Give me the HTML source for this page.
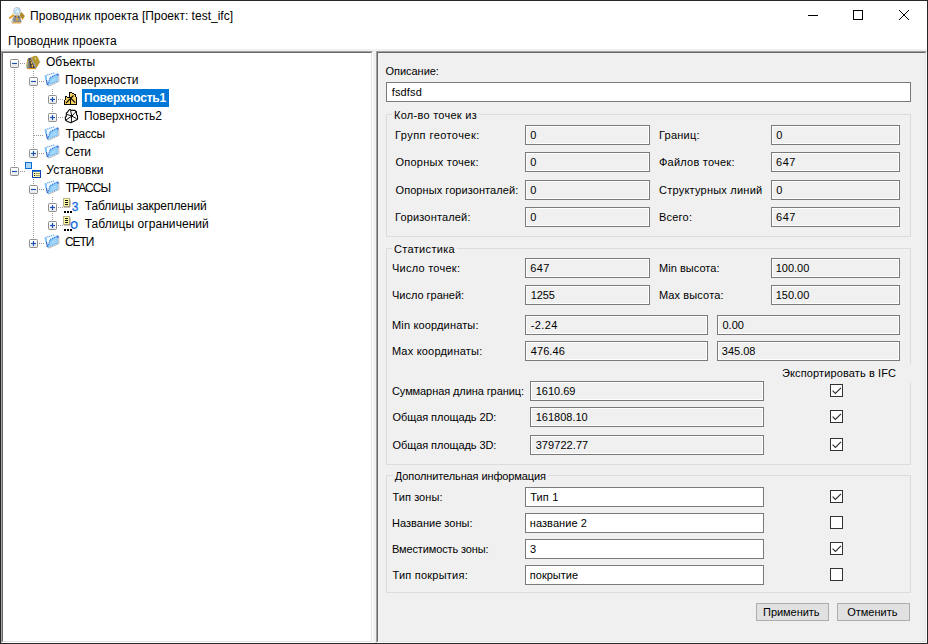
<!DOCTYPE html>
<html lang="ru"><head><meta charset="utf-8"><title>Проводник проекта</title>
<style>
html,body{margin:0;padding:0;background:#fff;}
body{width:928px;height:644px;overflow:hidden;position:relative;font-family:"Liberation Sans",sans-serif;color:#000;}
#win{position:absolute;left:0;top:0;width:926px;height:642px;border:1px solid #272727;background:#fff;}
.abs,span.t,span.s,span.sb,.ro,.ed,.cb,.grp,.btn{position:absolute;}
span.t{font-size:11px;line-height:13px;white-space:pre;}
span.s,span.sb{font-size:12px;line-height:15px;white-space:pre;}
span.sb{font-weight:bold;color:#fff;}
span.sk,span.sk2{position:absolute;font-size:12px;line-height:15px;color:#1b6fe0;}
span.sk{-webkit-text-stroke:0.3px #1b6fe0;}
span.sk2{font-weight:bold;font-size:10px;}
span.g{background:#f0f0f0;padding:0 2px;margin-left:-2px;}
span.g2{background:#f0f0f0;padding:3px 16px 3px 3px;margin:-3px 0 0 -3px;}
#strip{left:1px;top:49px;width:926px;height:594px;background:#f0f0f0;}
.panel{box-sizing:border-box;border-style:solid;border-width:1px;border-color:#a0a0a0 #fff #fff #a0a0a0;}
.panel>i{display:block;box-sizing:border-box;width:100%;height:100%;border-style:solid;border-width:1px;border-color:#696969 #e3e3e3 #e3e3e3 #696969;}
#tree{left:1px;top:51px;width:372px;height:592px;}
#tree>i{background:#fff;}
#right{left:376px;top:51px;width:551px;height:592px;}
#right>i{background:#f0f0f0;}
#selbg{left:82px;top:89px;width:87px;height:18px;background:#0078d7;}
.grp{box-sizing:border-box;border:1px solid #dcdcdc;left:386px;width:525px;}
.ro{height:16px;border:1px solid #7a7a7a;box-shadow:inset 0 0 0 1px #fff;background:#f0f0f0;padding:1px;}
.ed{height:18px;border:1px solid #7a7a7a;background:#fff;}
.cb{left:830px;width:11px;height:11px;border:1px solid #333;background:#fff;}
.cb svg{display:block;}
.btn{box-sizing:border-box;top:603px;width:73px;height:18px;border:1px solid #adadad;background:#e1e1e1;}
</style></head><body>
<div id="win"></div>
<div class="abs" id="strip"></div>
<div class="abs panel" id="tree"><i></i></div>
<div class="abs panel" id="right"><i></i></div>
<div class="abs" id="selbg"></div>

<svg class="abs" style="left:0;top:0" width="372" height="300" viewBox="0 0 372 300">
<defs><linearGradient id="bg" x1="0" y1="0" x2="0" y2="1"><stop offset="0" stop-color="#fff"/><stop offset=".55" stop-color="#fafafa"/><stop offset="1" stop-color="#e2e2e2"/></linearGradient></defs>
<rect x="10.5" y="59.5" width="8" height="8" rx="0.9" fill="url(#bg)" stroke="#8e8e8e"/><path d="M12 63.5H17" stroke="#1d4fb5" stroke-width="1.2"/>
<path d="M20 63.5H25" stroke="#9a9a9a" stroke-width="1" stroke-dasharray="1 1"/>
<rect x="29.5" y="77.5" width="8" height="8" rx="0.9" fill="url(#bg)" stroke="#8e8e8e"/><path d="M31 81.5H36" stroke="#1d4fb5" stroke-width="1.2"/>
<path d="M39 81.5H44" stroke="#9a9a9a" stroke-width="1" stroke-dasharray="1 1"/>
<rect x="48.5" y="95.5" width="8" height="8" rx="0.9" fill="url(#bg)" stroke="#8e8e8e"/><path d="M50 99.5H55" stroke="#1d4fb5" stroke-width="1.2"/><path d="M52.5 97V102" stroke="#1d4fb5" stroke-width="1.2"/>
<path d="M58 99.5H63" stroke="#9a9a9a" stroke-width="1" stroke-dasharray="1 1"/>
<rect x="48.5" y="113.5" width="8" height="8" rx="0.9" fill="url(#bg)" stroke="#8e8e8e"/><path d="M50 117.5H55" stroke="#1d4fb5" stroke-width="1.2"/><path d="M52.5 115V120" stroke="#1d4fb5" stroke-width="1.2"/>
<path d="M58 117.5H63" stroke="#9a9a9a" stroke-width="1" stroke-dasharray="1 1"/>
<path d="M34 135.5H44" stroke="#9a9a9a" stroke-width="1" stroke-dasharray="1 1"/>
<rect x="29.5" y="149.5" width="8" height="8" rx="0.9" fill="url(#bg)" stroke="#8e8e8e"/><path d="M31 153.5H36" stroke="#1d4fb5" stroke-width="1.2"/><path d="M33.5 151V156" stroke="#1d4fb5" stroke-width="1.2"/>
<path d="M39 153.5H44" stroke="#9a9a9a" stroke-width="1" stroke-dasharray="1 1"/>
<rect x="10.5" y="167.5" width="8" height="8" rx="0.9" fill="url(#bg)" stroke="#8e8e8e"/><path d="M12 171.5H17" stroke="#1d4fb5" stroke-width="1.2"/>
<path d="M20 171.5H25" stroke="#9a9a9a" stroke-width="1" stroke-dasharray="1 1"/>
<rect x="29.5" y="185.5" width="8" height="8" rx="0.9" fill="url(#bg)" stroke="#8e8e8e"/><path d="M31 189.5H36" stroke="#1d4fb5" stroke-width="1.2"/>
<path d="M39 189.5H44" stroke="#9a9a9a" stroke-width="1" stroke-dasharray="1 1"/>
<rect x="48.5" y="203.5" width="8" height="8" rx="0.9" fill="url(#bg)" stroke="#8e8e8e"/><path d="M50 207.5H55" stroke="#1d4fb5" stroke-width="1.2"/><path d="M52.5 205V210" stroke="#1d4fb5" stroke-width="1.2"/>
<path d="M58 207.5H63" stroke="#9a9a9a" stroke-width="1" stroke-dasharray="1 1"/>
<rect x="48.5" y="221.5" width="8" height="8" rx="0.9" fill="url(#bg)" stroke="#8e8e8e"/><path d="M50 225.5H55" stroke="#1d4fb5" stroke-width="1.2"/><path d="M52.5 223V228" stroke="#1d4fb5" stroke-width="1.2"/>
<path d="M58 225.5H63" stroke="#9a9a9a" stroke-width="1" stroke-dasharray="1 1"/>
<rect x="29.5" y="239.5" width="8" height="8" rx="0.9" fill="url(#bg)" stroke="#8e8e8e"/><path d="M31 243.5H36" stroke="#1d4fb5" stroke-width="1.2"/><path d="M33.5 241V246" stroke="#1d4fb5" stroke-width="1.2"/>
<path d="M39 243.5H44" stroke="#9a9a9a" stroke-width="1" stroke-dasharray="1 1"/>
<path d="M14.5 69V166" stroke="#9a9a9a" stroke-width="1" stroke-dasharray="1 1"/>
<path d="M33.5 71V76" stroke="#9a9a9a" stroke-width="1" stroke-dasharray="1 1"/>
<path d="M33.5 87V148" stroke="#9a9a9a" stroke-width="1" stroke-dasharray="1 1"/>
<path d="M52.5 89V94" stroke="#9a9a9a" stroke-width="1" stroke-dasharray="1 1"/>
<path d="M52.5 105V112" stroke="#9a9a9a" stroke-width="1" stroke-dasharray="1 1"/>
<path d="M33.5 179V184" stroke="#9a9a9a" stroke-width="1" stroke-dasharray="1 1"/>
<path d="M33.5 195V238" stroke="#9a9a9a" stroke-width="1" stroke-dasharray="1 1"/>
<path d="M52.5 197V202" stroke="#9a9a9a" stroke-width="1" stroke-dasharray="1 1"/>
<path d="M52.5 213V220" stroke="#9a9a9a" stroke-width="1" stroke-dasharray="1 1"/>
<g transform="translate(25 54)"><path d="M6 3.4L9.5 1.8L12 2L15.2 8L12.6 12L11.6 14Z" fill="#b8962f"/><path d="M3.2 4.2L6 3.4L11.8 14L1.4 14Z" fill="#8d9296"/><path d="M2.4 5L3.3 5L2 12.5L1 12.5Z" fill="#c9a432"/><path d="M4.6 4L6 3.4L11.8 14L9.6 14Z" fill="#9aa0a6"/><path d="M3.6 4.3L5.2 4L10 14L5 14Z" fill="#3a3638"/><path d="M3.3 4.3L4.2 4.6L5.4 14L3.8 14Z" fill="#6f7478"/><rect x="5" y="6" width="1.2" height="1.3" fill="#ef9a1a"/><rect x="5.9" y="7.7" width="1.4" height="2.1" fill="#f7c23a"/><rect x="6.6" y="10.6" width="1.5" height="2.7" fill="#f7b92e"/><path d="M9 4L11 3.8L11 6Z" fill="#c5dc92"/><circle cx="14.5" cy="8" r="0.8" fill="#9fb0b8"/><circle cx="12.6" cy="11.6" r="0.7" fill="#ef9a1a"/><circle cx="2" cy="11" r="0.7" fill="#a9d86a"/><path d="M2 14.6H11" stroke="#d98a12" stroke-width="1.1"/></g>
<g transform="translate(44 71.5)"><path d="M1.4 4L10.7 1.2L13.8 2.3L6.3 6L3.6 13.6Z" fill="#f4faff"/><path d="M14.7 3.4L15 9.9L5 14.5L4 14.1" fill="none" stroke="#9a9a9a" stroke-width="1" opacity=".7"/><path d="M6.3 6L13.9 2.2L14.2 9.6L3.7 13.8Z" fill="#8ccbf7"/><path d="M7.6 7.8L12.2 5.6L12.6 8.8L6.2 11.8Z" fill="#a4d8fb"/><path d="M1.4 4L10.8 1.2" stroke="#4a98ea" stroke-width="1.1" stroke-dasharray="1.1 0.9" fill="none"/><path d="M3.6 13.6L6.3 6L13.9 2.2" stroke="#2a78e0" stroke-width="1.15" stroke-dasharray="1.2 0.8" fill="none"/><path d="M3.7 13.8L14.2 9.6" stroke="#62aff2" stroke-width="0.9" stroke-dasharray="1.2 1" fill="none"/><path d="M1.6 4.6L3.4 13.4" stroke="#1f55c4" stroke-width="1.1" fill="none"/><path d="M13.9 2.2L14 4.2" stroke="#1f55c4" stroke-width="1.2"/><path d="M1.2 3.8L2.4 8.5" stroke="#86c9f7" stroke-width="1.8"/></g>
<g transform="translate(63 90)"><path d="M1.5 14.5L1.5 10L2.5 10L2.5 6.5L4 6.5L6.5 7.5L6.5 2.5L9 2.5L12.5 4.5L12.5 7L13.5 7L13.5 14.5Z" fill="#f9d265"/><g fill="#050505" shape-rendering="crispEdges"><rect x="1" y="14" width="13" height="1"/><rect x="1" y="10" width="1" height="4"/><rect x="2" y="6" width="1" height="4"/><rect x="2" y="6" width="2" height="1"/><rect x="4" y="7" width="2" height="1"/><rect x="6" y="2" width="1" height="6"/><rect x="6" y="2" width="3" height="1"/><rect x="9" y="3" width="2" height="1"/><rect x="11" y="4" width="2" height="1"/><rect x="12" y="4" width="1" height="3"/><rect x="13" y="7" width="1" height="8"/><rect x="7" y="7" width="1" height="7"/></g><path d="M3 13L10.5 5.5M8 8.5L12.2 12.7" stroke="#050505" stroke-width="1.1" fill="none"/></g>
<g transform="translate(63 108)"><path d="M7 1.4L8 2.4L12 2.4L13.3 3.8L13.6 7L14.5 7.4L14.5 11.3L12 12.7L10.3 13.5L7.8 14.7L4.4 13.5L2.5 12.1L2.3 9L3.3 8.5L3.3 5.2L4.7 4L5.5 2.4Z" fill="#fff" stroke="#050505" stroke-width="1.1" stroke-linejoin="round"/><path d="M8.9 8L7.5 2.6M8.9 8L12.3 4.4M8.9 8L13.5 10.6M8.6 8L8.3 14M8.9 8L3 12M8.9 8L3.6 6.4" stroke="#050505" stroke-width="0.95" fill="none"/><rect x="8.2" y="7.2" width="1.6" height="1.6" fill="#050505"/><rect x="12.2" y="3.2" width="1.6" height="1.6" fill="#050505"/></g>
<g transform="translate(44 125.5)"><path d="M1.4 4L10.7 1.2L13.8 2.3L6.3 6L3.6 13.6Z" fill="#f4faff"/><path d="M14.7 3.4L15 9.9L5 14.5L4 14.1" fill="none" stroke="#9a9a9a" stroke-width="1" opacity=".7"/><path d="M6.3 6L13.9 2.2L14.2 9.6L3.7 13.8Z" fill="#8ccbf7"/><path d="M7.6 7.8L12.2 5.6L12.6 8.8L6.2 11.8Z" fill="#a4d8fb"/><path d="M1.4 4L10.8 1.2" stroke="#4a98ea" stroke-width="1.1" stroke-dasharray="1.1 0.9" fill="none"/><path d="M3.6 13.6L6.3 6L13.9 2.2" stroke="#2a78e0" stroke-width="1.15" stroke-dasharray="1.2 0.8" fill="none"/><path d="M3.7 13.8L14.2 9.6" stroke="#62aff2" stroke-width="0.9" stroke-dasharray="1.2 1" fill="none"/><path d="M1.6 4.6L3.4 13.4" stroke="#1f55c4" stroke-width="1.1" fill="none"/><path d="M13.9 2.2L14 4.2" stroke="#1f55c4" stroke-width="1.2"/><path d="M1.2 3.8L2.4 8.5" stroke="#86c9f7" stroke-width="1.8"/></g>
<g transform="translate(44 143.5)"><path d="M1.4 4L10.7 1.2L13.8 2.3L6.3 6L3.6 13.6Z" fill="#f4faff"/><path d="M14.7 3.4L15 9.9L5 14.5L4 14.1" fill="none" stroke="#9a9a9a" stroke-width="1" opacity=".7"/><path d="M6.3 6L13.9 2.2L14.2 9.6L3.7 13.8Z" fill="#8ccbf7"/><path d="M7.6 7.8L12.2 5.6L12.6 8.8L6.2 11.8Z" fill="#a4d8fb"/><path d="M1.4 4L10.8 1.2" stroke="#4a98ea" stroke-width="1.1" stroke-dasharray="1.1 0.9" fill="none"/><path d="M3.6 13.6L6.3 6L13.9 2.2" stroke="#2a78e0" stroke-width="1.15" stroke-dasharray="1.2 0.8" fill="none"/><path d="M3.7 13.8L14.2 9.6" stroke="#62aff2" stroke-width="0.9" stroke-dasharray="1.2 1" fill="none"/><path d="M1.6 4.6L3.4 13.4" stroke="#1f55c4" stroke-width="1.1" fill="none"/><path d="M13.9 2.2L14 4.2" stroke="#1f55c4" stroke-width="1.2"/><path d="M1.2 3.8L2.4 8.5" stroke="#86c9f7" stroke-width="1.8"/></g>
<g transform="translate(25 161)"><rect x="0.5" y="1.5" width="6" height="6" fill="#a8d4f7" stroke="#0b6fd6"/><rect x="7.5" y="9.5" width="8" height="7" fill="#fdfbb5" stroke="#123fb0"/><path d="M7 10H16" stroke="#0b5bd0" stroke-width="1.6"/><path d="M9 12.5H10M9 14.5H10" stroke="#111" stroke-width="1"/><path d="M10.5 12.5H15M10.5 14.5H15" stroke="#8a8a6a" stroke-width="0.8"/></g>
<g transform="translate(44 179.5)"><path d="M1.4 4L10.7 1.2L13.8 2.3L6.3 6L3.6 13.6Z" fill="#f4faff"/><path d="M14.7 3.4L15 9.9L5 14.5L4 14.1" fill="none" stroke="#9a9a9a" stroke-width="1" opacity=".7"/><path d="M6.3 6L13.9 2.2L14.2 9.6L3.7 13.8Z" fill="#8ccbf7"/><path d="M7.6 7.8L12.2 5.6L12.6 8.8L6.2 11.8Z" fill="#a4d8fb"/><path d="M1.4 4L10.8 1.2" stroke="#4a98ea" stroke-width="1.1" stroke-dasharray="1.1 0.9" fill="none"/><path d="M3.6 13.6L6.3 6L13.9 2.2" stroke="#2a78e0" stroke-width="1.15" stroke-dasharray="1.2 0.8" fill="none"/><path d="M3.7 13.8L14.2 9.6" stroke="#62aff2" stroke-width="0.9" stroke-dasharray="1.2 1" fill="none"/><path d="M1.6 4.6L3.4 13.4" stroke="#1f55c4" stroke-width="1.1" fill="none"/><path d="M13.9 2.2L14 4.2" stroke="#1f55c4" stroke-width="1.2"/><path d="M1.2 3.8L2.4 8.5" stroke="#86c9f7" stroke-width="1.8"/></g>
<g transform="translate(63 197)"><rect x="0.5" y="1.5" width="6" height="8" fill="#fdfba0" stroke="#b9b394"/><path d="M7 2.5V10H1" stroke="#8c8877" stroke-width="1" fill="none"/><path d="M2 3.5H5M2 5.5H5M2 7.5H5" stroke="#111" stroke-width="1.2"/><path d="M1 15H3M4 15H6M7 15H9" stroke="#000" stroke-width="2"/></g>
<g transform="translate(63 215)"><rect x="0.5" y="1.5" width="6" height="8" fill="#fdfba0" stroke="#b9b394"/><path d="M7 2.5V10H1" stroke="#8c8877" stroke-width="1" fill="none"/><path d="M2 3.5H5M2 5.5H5M2 7.5H5" stroke="#111" stroke-width="1.2"/><path d="M1 15H3M4 15H6M7 15H9" stroke="#000" stroke-width="2"/></g>
<g transform="translate(44 233.5)"><path d="M1.4 4L10.7 1.2L13.8 2.3L6.3 6L3.6 13.6Z" fill="#f4faff"/><path d="M14.7 3.4L15 9.9L5 14.5L4 14.1" fill="none" stroke="#9a9a9a" stroke-width="1" opacity=".7"/><path d="M6.3 6L13.9 2.2L14.2 9.6L3.7 13.8Z" fill="#8ccbf7"/><path d="M7.6 7.8L12.2 5.6L12.6 8.8L6.2 11.8Z" fill="#a4d8fb"/><path d="M1.4 4L10.8 1.2" stroke="#4a98ea" stroke-width="1.1" stroke-dasharray="1.1 0.9" fill="none"/><path d="M3.6 13.6L6.3 6L13.9 2.2" stroke="#2a78e0" stroke-width="1.15" stroke-dasharray="1.2 0.8" fill="none"/><path d="M3.7 13.8L14.2 9.6" stroke="#62aff2" stroke-width="0.9" stroke-dasharray="1.2 1" fill="none"/><path d="M1.6 4.6L3.4 13.4" stroke="#1f55c4" stroke-width="1.1" fill="none"/><path d="M13.9 2.2L14 4.2" stroke="#1f55c4" stroke-width="1.2"/><path d="M1.2 3.8L2.4 8.5" stroke="#86c9f7" stroke-width="1.8"/></g>
</svg>

<!-- title icon + caption buttons -->
<svg class="abs" style="left:9px;top:7px" width="17" height="17" viewBox="0 0 17 17">
<path d="M10.7 7.2L12.5 5L15.9 9.1L13.8 12.5L11.6 10.7Z" fill="#b08a2a"/>
<path d="M5.2 8.3L10.6 8.3L12.8 15.3L2.3 15.3Z" fill="#8b8e8d"/>
<path d="M3.6 11L2.5 15L4.5 15Z" fill="#c3c8cc"/>
<path d="M4.2 8.4L0.8 11" stroke="#f0a030" stroke-width="2.2" stroke-linecap="round"/>
<circle cx="4.3" cy="7.3" r="0.8" fill="#a9d86a"/>
<rect x="6.3" y="9" width="1" height="1" fill="#4a2a2a"/><rect x="9.3" y="9.6" width="1" height="1.3" fill="#4a2a2a"/>
<rect x="7.1" y="8.8" width="1.3" height="1.3" fill="#f3b11f"/><rect x="7.5" y="11.2" width="1.5" height="2.4" fill="#f3b11f"/>
<circle cx="8" cy="3.9" r="3.4" fill="#b4defb" stroke="#b9c0c7" stroke-width="1"/>
<circle cx="8.7" cy="4.7" r="1.6" fill="#e3eef5"/>
<path d="M5.6 3.4A2.6 2.6 0 0 1 7.6 1.5" stroke="#fff" stroke-width="1" fill="none"/>
<path d="M3 15.9H12" stroke="#d98a12" stroke-width="1"/>
<circle cx="13.5" cy="12" r="0.7" fill="#ef9a1a"/>
</svg>
<svg class="abs" style="left:800px;top:5px" width="120" height="22" viewBox="0 0 120 22" shape-rendering="crispEdges">
<path d="M8 10.5H18" stroke="#000" stroke-width="1"/>
<rect x="53.5" y="5.5" width="9" height="9" fill="none" stroke="#000" stroke-width="1"/>
<path d="M99 5L109 15M109 5L99 15" stroke="#000" stroke-width="1" shape-rendering="geometricPrecision"/>
</svg>

<!-- group boxes -->
<div class="grp" style="top:114px;height:123px"></div>
<div class="grp" style="top:248px;height:217px"></div>
<div class="grp" style="top:475px;height:118px"></div>

<div class="ed" style="left:386px;top:82px;width:523px"></div>
<div class="ro" style="left:525px;top:125px;width:121px"></div>
<div class="ro" style="left:771px;top:125px;width:125px"></div>
<div class="ro" style="left:525px;top:152px;width:121px"></div>
<div class="ro" style="left:771px;top:152px;width:125px"></div>
<div class="ro" style="left:525px;top:180px;width:121px"></div>
<div class="ro" style="left:771px;top:180px;width:125px"></div>
<div class="ro" style="left:525px;top:207px;width:121px"></div>
<div class="ro" style="left:771px;top:207px;width:125px"></div>
<div class="ro" style="left:525px;top:258px;width:121px"></div>
<div class="ro" style="left:771px;top:258px;width:125px"></div>
<div class="ro" style="left:525px;top:285px;width:121px"></div>
<div class="ro" style="left:771px;top:285px;width:125px"></div>
<div class="ro" style="left:525px;top:315px;width:179px"></div>
<div class="ro" style="left:717px;top:315px;width:179px"></div>
<div class="ro" style="left:525px;top:341px;width:179px"></div>
<div class="ro" style="left:717px;top:341px;width:179px"></div>
<div class="ro" style="left:530px;top:381px;width:230px"></div>
<div class="ro" style="left:530px;top:407px;width:230px"></div>
<div class="ro" style="left:530px;top:435px;width:230px"></div>
<div class="ed" style="left:525px;top:487px;width:237px"></div>
<div class="ed" style="left:525px;top:513px;width:237px"></div>
<div class="ed" style="left:525px;top:539px;width:237px"></div>
<div class="ed" style="left:525px;top:565px;width:237px"></div>
<div class="cb" style="top:384px"><svg width="11" height="11" viewBox="0 0 11 11"><path d="M1.6 5.6L4.4 8.4L10 2.8" fill="none" stroke="#2b2b2b" stroke-width="1.1"/></svg></div>
<div class="cb" style="top:410px"><svg width="11" height="11" viewBox="0 0 11 11"><path d="M1.6 5.6L4.4 8.4L10 2.8" fill="none" stroke="#2b2b2b" stroke-width="1.1"/></svg></div>
<div class="cb" style="top:438px"><svg width="11" height="11" viewBox="0 0 11 11"><path d="M1.6 5.6L4.4 8.4L10 2.8" fill="none" stroke="#2b2b2b" stroke-width="1.1"/></svg></div>
<div class="cb" style="top:490px"><svg width="11" height="11" viewBox="0 0 11 11"><path d="M1.6 5.6L4.4 8.4L10 2.8" fill="none" stroke="#2b2b2b" stroke-width="1.1"/></svg></div>
<div class="cb" style="top:516px"></div>
<div class="cb" style="top:542px"><svg width="11" height="11" viewBox="0 0 11 11"><path d="M1.6 5.6L4.4 8.4L10 2.8" fill="none" stroke="#2b2b2b" stroke-width="1.1"/></svg></div>
<div class="cb" style="top:568px"></div>
<div class="btn" style="left:756px"></div>
<div class="btn" style="left:837px"></div>

<span class="s" style="left:30.00px;top:9px;letter-spacing:0.064px;">Проводник проекта</span>
<span class="s" style="left:141.96px;top:9px;letter-spacing:0.014px;">[Проект: test_ifc]</span>
<span class="s" style="left:8.00px;top:34px;letter-spacing:0.078px;">Проводник проекта</span>
<span class="s" style="left:46.09px;top:55px;letter-spacing:-0.076px;">Объекты</span>
<span class="s" style="left:65.00px;top:73px;letter-spacing:0.126px;">Поверхности</span>
<span class="sb sel" style="left:84.00px;top:91px;letter-spacing:-0.235px;">Поверхность1</span>
<span class="s" style="left:84.00px;top:109px;letter-spacing:-0.043px;">Поверхность2</span>
<span class="s" style="left:65.75px;top:127px;letter-spacing:-0.240px;">Трассы</span>
<span class="s" style="left:65.00px;top:145px;letter-spacing:-0.380px;">Сети</span>
<span class="s" style="left:46.33px;top:163px;letter-spacing:0.088px;">Установки</span>
<span class="s" style="left:65.75px;top:181px;letter-spacing:-0.968px;">ТРАССЫ</span>
<span class="s" style="left:84.75px;top:199px;letter-spacing:-0.070px;">Таблицы закреплений</span>
<span class="s" style="left:84.75px;top:217px;letter-spacing:0.058px;">Таблицы ограничений</span>
<span class="s" style="left:65.00px;top:235px;letter-spacing:-1.050px;">СЕТИ</span>
<span class="sk" style="left:71.80px;top:200px;">3</span>
<span class="sk2" style="left:70.17px;top:218px;">O</span>
<span class="t" style="left:385.50px;top:65px;letter-spacing:-0.031px;">Описание:</span>
<span class="t" style="left:391.77px;top:86px;letter-spacing:0.133px;">fsdfsd</span>
<span class="t g" style="left:394.00px;top:109px;letter-spacing:0.268px;">Кол-во точек из</span>
<span class="t" style="left:395.00px;top:129px;letter-spacing:0.438px;">Групп геоточек:</span>
<span class="t" style="left:395.50px;top:156px;letter-spacing:0.245px;">Опорных точек:</span>
<span class="t" style="left:395.50px;top:184px;letter-spacing:0.069px;">Опорных горизонталей:</span>
<span class="t" style="left:395.00px;top:211px;letter-spacing:0.167px;">Горизонталей:</span>
<span class="t" style="left:659.00px;top:129px;letter-spacing:0.222px;">Границ:</span>
<span class="t" style="left:658.95px;top:156px;letter-spacing:0.236px;">Файлов точек:</span>
<span class="t" style="left:659.00px;top:184px;letter-spacing:0.229px;">Структурных линий</span>
<span class="t" style="left:659.00px;top:211px;letter-spacing:0.219px;">Всего:</span>
<span class="t" style="left:530.15px;top:129px;letter-spacing:0.375px;">0</span>
<span class="t" style="left:530.15px;top:156px;letter-spacing:0.375px;">0</span>
<span class="t" style="left:530.15px;top:184px;letter-spacing:0.375px;">0</span>
<span class="t" style="left:530.15px;top:211px;letter-spacing:0.375px;">0</span>
<span class="t" style="left:776.15px;top:129px;letter-spacing:0.375px;">0</span>
<span class="t" style="left:776.00px;top:156px;letter-spacing:0.525px;">647</span>
<span class="t" style="left:776.15px;top:184px;letter-spacing:0.375px;">0</span>
<span class="t" style="left:776.00px;top:211px;letter-spacing:0.525px;">647</span>
<span class="t g" style="left:394.00px;top:243px;letter-spacing:0.330px;">Статистика</span>
<span class="t" style="left:391.95px;top:262px;letter-spacing:0.259px;">Число точек:</span>
<span class="t" style="left:391.95px;top:289px;letter-spacing:-0.008px;">Число граней:</span>
<span class="t" style="left:392.00px;top:319px;letter-spacing:0.153px;">Min координаты:</span>
<span class="t" style="left:392.00px;top:345px;letter-spacing:0.201px;">Max координаты:</span>
<span class="t" style="left:659.00px;top:262px;letter-spacing:0.036px;">Min высота:</span>
<span class="t" style="left:659.00px;top:289px;letter-spacing:0.130px;">Max высота:</span>
<span class="t" style="left:530.16px;top:262px;letter-spacing:0.483px;">647</span>
<span class="t" style="left:530.68px;top:289px;letter-spacing:-0.051px;">1255</span>
<span class="t" style="left:530.76px;top:319px;letter-spacing:0.391px;">-2.24</span>
<span class="t" style="left:530.75px;top:345px;letter-spacing:0.082px;">476.46</span>
<span class="t" style="left:775.68px;top:262px;">100.00</span>
<span class="t" style="left:775.68px;top:289px;">150.00</span>
<span class="t" style="left:722.50px;top:319px;">0.00</span>
<span class="t" style="left:721.85px;top:345px;">345.08</span>
<span class="t g2" style="left:782.00px;top:367px;letter-spacing:0.118px;">Экспортировать в IFC</span>
<span class="t" style="left:392.00px;top:385px;letter-spacing:-0.089px;">Суммарная длина границ:</span>
<span class="t" style="left:392.50px;top:411px;letter-spacing:-0.082px;">Общая площадь 2D:</span>
<span class="t" style="left:392.50px;top:439px;letter-spacing:-0.082px;">Общая площадь 3D:</span>
<span class="t" style="left:535.68px;top:385px;">1610.69</span>
<span class="t" style="left:535.68px;top:411px;">161808.10</span>
<span class="t" style="left:535.66px;top:439px;letter-spacing:0.068px;">379722.77</span>
<span class="t g" style="left:394.87px;top:470px;letter-spacing:-0.110px;">Дополнительная информация</span>
<span class="t" style="left:392.46px;top:491px;letter-spacing:0.070px;">Тип зоны:</span>
<span class="t" style="left:392.00px;top:517px;letter-spacing:0.015px;">Название зоны:</span>
<span class="t" style="left:392.00px;top:543px;letter-spacing:-0.136px;">Вместимость зоны:</span>
<span class="t" style="left:392.46px;top:569px;letter-spacing:0.229px;">Тип покрытия:</span>
<span class="t" style="left:530.20px;top:491px;letter-spacing:0.146px;">Тип 1</span>
<span class="t" style="left:529.79px;top:517px;letter-spacing:0.072px;">название 2</span>
<span class="t" style="left:530.06px;top:543px;letter-spacing:0.275px;">3</span>
<span class="t" style="left:529.87px;top:569px;">покрытие</span>
<span class="t" style="left:763.06px;top:606px;letter-spacing:-0.053px;">Применить</span>
<span class="t" style="left:847.18px;top:606px;letter-spacing:0.005px;">Отменить</span>
</body></html>
